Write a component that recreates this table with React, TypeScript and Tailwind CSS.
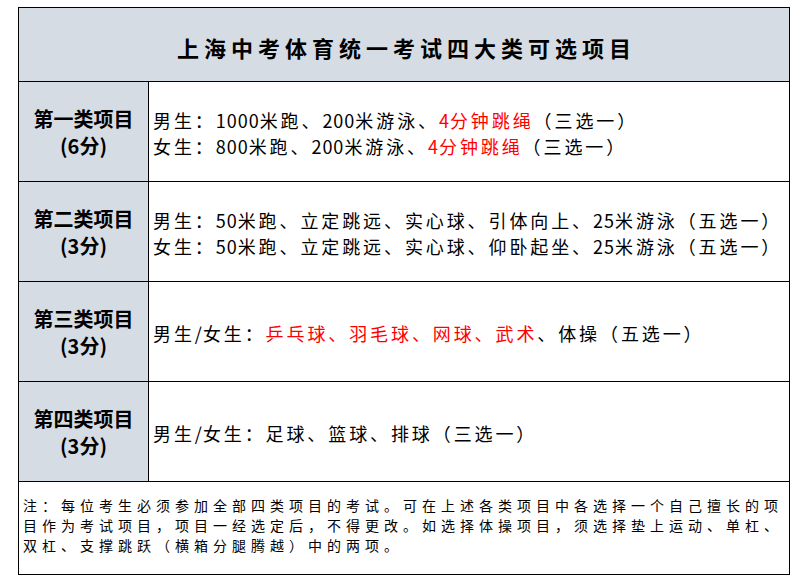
import { FC } from "react";

interface Segment {
  text: string;
  red?: boolean;
}

interface CategoryRow {
  label: string;
  score: string;
  lines: Array<Array<Segment>>;
}

const rows: Array<CategoryRow> = [
  {
    label: "第一类项目",
    score: "(6分)",
    lines: [
      [
        { text: "男生：1000米跑、200米游泳、" },
        { text: "4分钟跳绳", red: true },
        { text: "（三选一）" },
      ],
      [
        { text: "女生：800米跑、200米游泳、" },
        { text: "4分钟跳绳", red: true },
        { text: "（三选一）" },
      ],
    ],
  },
  {
    label: "第二类项目",
    score: "(3分)",
    lines: [
      [{ text: "男生：50米跑、立定跳远、实心球、引体向上、25米游泳（五选一）" }],
      [{ text: "女生：50米跑、立定跳远、实心球、仰卧起坐、25米游泳（五选一）" }],
    ],
  },
  {
    label: "第三类项目",
    score: "(3分)",
    lines: [
      [
        { text: "男生/女生：" },
        { text: "乒乓球、羽毛球、网球、武术", red: true },
        { text: "、体操（五选一）" },
      ],
    ],
  },
  {
    label: "第四类项目",
    score: "(3分)",
    lines: [[{ text: "男生/女生：足球、篮球、排球（三选一）" }]],
  },
];

// digits and "/" are narrower in the sheet, so they get less tracking
const SpacedText: FC<{ text: string }> = ({ text }) => (
  <>
    {text.split(/([0-9/]+)/).map((part, i) =>
      /^[0-9/]+$/.test(part) ? (
        <span key={i} className="tracking-[1px]">
          {part}
        </span>
      ) : (
        part
      )
    )}
  </>
);

const Line: FC<{ segments: Array<Segment> }> = ({ segments }) => (
  <div className="whitespace-nowrap">
    {segments.map((seg, i) => (
      <span key={i} className={seg.red ? "text-[#ff0000]" : "text-black"}>
        <SpacedText text={seg.text} />
      </span>
    ))}
  </div>
);

const Row: FC<{ row: CategoryRow }> = ({ row }) => (
  <div className="flex h-[100px] border-b border-black">
    <div className="w-[130px] shrink-0 border-r border-black bg-[#d6dce4] flex flex-col items-center justify-center text-[20px] font-bold leading-[27px] text-black">
      <div>{row.label}</div>
      <div>{row.score}</div>
    </div>
    <div className="flex-1 flex flex-col justify-center pl-[4px] pt-[3px] text-[18px] leading-[26px] tracking-[2.9px]">
      {row.lines.map((segments, i) => (
        <Line key={i} segments={segments} />
      ))}
    </div>
  </div>
);

const App: FC = () => {
  return (
    <div className="min-h-screen bg-white pl-[18px] pt-[7px] font-['Noto_Sans_CJK_SC','Noto_Sans_CJK_TC',sans-serif]">
      <div className="w-[772px] border border-black">
        <div className="h-[74px] border-b border-black bg-[#d6dce4] flex items-center justify-center pt-[5px] pl-[5px]">
          <h1 className="text-[22px] font-bold tracking-[5px] text-black">
            上海中考体育统一考试四大类可选项目
          </h1>
        </div>
        {rows.map((row) => (
          <Row key={row.label} row={row} />
        ))}
        <div className="h-[92px] px-[4px] pt-[13px] text-[14px] leading-[20px] tracking-[5px] text-black">
          注：每位考生必须参加全部四类项目的考试。可在上述各类项目中各选择一个自己擅长的项目作为考试项目，项目一经选定后，不得更改。如选择体操项目，须选择垫上运动、单杠、双杠、支撑跳跃（横箱分腿腾越）中的两项。
        </div>
      </div>
    </div>
  );
};

export default App;
